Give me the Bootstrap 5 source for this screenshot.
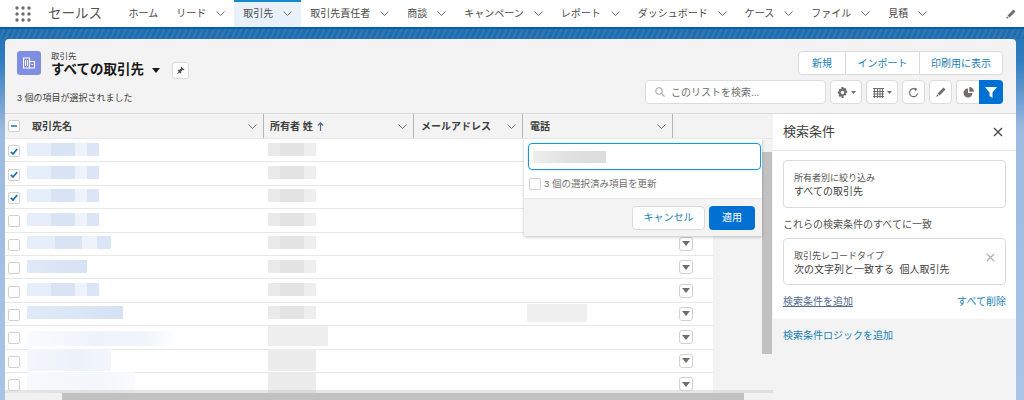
<!DOCTYPE html>
<html lang="ja">
<head>
<meta charset="utf-8">
<title>取引先</title>
<link href="https://cdn.jsdelivr.net/npm/bootstrap@5.3.0/dist/css/bootstrap.min.css" rel="stylesheet">
<style>
html,body{height:400px;overflow:hidden}
body{font-family:"Liberation Sans","Noto Sans CJK JP",sans-serif;font-size:10px;color:#3e3e3c;background:linear-gradient(180deg,#1a6cb0 0,#2f7cc0 60px,#9dbbe0 130px,#a9c4e6 400px);letter-spacing:0}
.flex-none{flex:none}
.sf-top{height:27px;background:#fff;padding-left:15px}
.sf-band{height:12px;background:repeating-linear-gradient(115deg,#1f6dae 0 3px,#2f78b6 3px 5px);border-top:2px solid #0b5fa5}
.sf-app{font-size:13.5px;color:#55534f;margin:0 17.5px 0 17px;line-height:27px;width:54px;white-space:nowrap}
.sf-tab{padding:0 9px;height:27px;white-space:nowrap;color:#4a4a48;display:flex;align-items:center;gap:10px}
.sf-on{background:#e8f1fa;border-top:2px solid #1589d0;padding-bottom:2px}
.sf-wrap{margin:0 8px 0 5px;height:361px;border-radius:4px 4px 0 0;background:#f3f3f3;overflow:hidden;display:flex;flex-direction:column}
.sf-head{height:75px;padding:12px 12px 0 12px;flex:none;border-bottom:1px solid #dddbda}
.sf-ico{width:24px;height:24px;background:#7f8ee0;border-radius:3px}
.sf-lbl{font-size:8.5px;line-height:11px;color:#3e3e3c}
.sf-ttl{font-size:13.5px;line-height:16px;font-weight:700;color:#181818;white-space:nowrap}
.sf-tblock{margin-left:10px}
.sf-pin{width:17px;height:17px;background:#fff;border:1px solid #dddbda;border-radius:3px;margin:11px 0 0 12px}
.sf-sel{font-size:9px;color:#3e3e3c;line-height:12px;margin-top:13px}
.sf-grp{width:205px;height:24px;background:#fff;border:1px solid #dddbda;border-radius:4px;color:#1a7fb5;margin-right:1px}
.sf-grp>div{height:100%;border-left:1px solid #dddbda}
.sf-grp>div:first-child{border-left:0}
.sf-g1{width:46px}.sf-g2{width:74px}
.sf-bar{margin-top:auto;margin-bottom:9px}
.sf-sr{width:181px;height:24px;background:#fff;border:1px solid #dddbda;border-radius:4px;padding-left:9px;color:#706e6b;gap:6px;margin-right:4px}
.sf-tb{height:24px;background:#fff;border:1px solid #dddbda;border-radius:4px;margin-right:4px;gap:3px}
.sf-w32{width:32px}.sf-w23{width:23px}
.sf-tbl{border-radius:4px 0 0 4px;margin-right:0;border-right:0}
.sf-blue{width:24px;height:24px;background:#0070d2;border-radius:0 4px 4px 0;margin-right:1px}
.sf-mainrow{min-height:0}
.sf-gridcol{width:768px}
.sf-cols{height:25px;flex:none;background:#f3f3f3;border-bottom:1px solid #e8e8e8;width:768px;font-size:10px;font-weight:700;color:#3e3e3c}
.sf-cols>div{height:100%;display:flex;align-items:center;justify-content:space-between;padding:0 6px 0 7px;border-right:1px solid #b5b5b5}
.sf-c0{width:19px;flex:none;padding:0 0 0 3px}
.sf-c1{width:240px;flex:none}.sf-c2{width:150px;flex:none}.sf-c3{width:109px;flex:none}.sf-c4{width:150px;flex:none}.sf-c5{width:40px;flex:none}
.sf-cols>.sf-c0{padding:0 0 0 3px;border-right:0;justify-content:flex-start}
.sf-cols>.sf-c1{padding-left:8px}
.sf-cols>.sf-c2{padding-left:6px;justify-content:flex-start}
.sf-body{flex:1 1 auto;min-height:0;width:768px;position:relative;overflow:hidden}
.sf-rows{width:708px;background:#fff;flex:none;overflow:hidden}
.sf-rw{height:23.4px;border-bottom:1px solid #e8e8e8;display:flex;align-items:center}
.sf-rw>.sf-c0{padding-left:3px}
.sf-rw .sf-cb{margin-top:2px}
.sf-cb{width:12px;height:12px;background:#fff;border:1px solid #d2d0ce;border-radius:2px;flex:none;display:flex;align-items:center;justify-content:center}
.sf-blb{height:13px;margin-left:3px;margin-bottom:2px;filter:blur(.7px)}
.sf-bn{background:linear-gradient(90deg,#e6eefa 0 33%,#d8e4f4 33% 66%,#eef3fb 66% 83%,#dbe5f5 83%)}
.sf-bo{margin-left:4px;width:48px;background:linear-gradient(90deg,#eaeaea 0 25%,#e3e3e3 25% 75%,#eeeeee 75%)}
.sf-w72{width:72px}.sf-w84{width:84px}.sf-w60{width:60px}.sf-w96{width:96px}
.sf-dk{background:linear-gradient(90deg,#e0e9f7,#d5e2f4)}
.sf-ft1{width:150px;height:15px;background:linear-gradient(90deg,#fafbfe,#eef3fb 45%,#f0f5fc 80%,#fff);margin-top:4px}
.sf-ft2{width:84px;height:22px;background:linear-gradient(90deg,#f3f6fc,#edf2fa 60%,#f3f6fc)}
.sf-ft3{width:108px;height:22px;background:linear-gradient(90deg,#f8f9fd,#f3f6fb 70%,#fbfbfd)}
.sf-go{margin-left:4px;width:60px;height:20px;background:#eeeeee}
.sf-go2{margin-left:4px;width:48px;height:22px;background:#ececec}
.sf-ph{margin-left:4px;width:60px;height:18px;background:#efefef}
.sf-act{width:14px;height:14px;border:1px solid #d2d0ce;border-radius:3px;background:#fff;margin-left:6px;display:flex;align-items:center;justify-content:center}
.sf-tri{width:0;height:0;border-left:4px solid transparent;border-right:4px solid transparent;border-top:5px solid #706e6b}
.sf-gap{width:49px;flex:none;background:#f3f3f3}
.sf-vs{width:11px;flex:none;background:#f3f3f3;padding-top:13px}
.sf-vth{width:10px;height:202px;background:#c1c1c1}
.sf-fade{position:absolute;left:0;right:0;bottom:0;height:3px;background:rgba(200,200,200,.45)}
.sf-hs{height:7px;flex:none;width:768px;background:#f1f1f1;padding-left:57px}
.sf-hth{width:682px;height:7px;background:#c1c1c1}
.sf-pop{position:absolute;left:519px;top:0;width:238px;height:97px;background:#fff;box-shadow:0 1px 3px rgba(0,0,0,.25);z-index:3;display:flex;flex-direction:column}
.sf-inp{margin:4px 1px 0 4px;height:27px;border:1px solid #1b96d0;border-radius:4px;box-shadow:0 0 3px #bfe3f5;padding-left:4px;display:flex;align-items:center}
.sf-inb{width:73px;height:12px;background:linear-gradient(90deg,#eeeeee,#e0e0e0 50%,#dcdcdc);filter:blur(.6px)}
.sf-chk{height:28px;padding-left:5px;gap:3px;font-size:9.5px;color:#706e6b;display:flex;align-items:center}
.sf-ft{flex:1 1 auto;background:#f3f3f3;border-top:1px solid #e8e8e8;display:flex;justify-content:flex-end;align-items:center;padding-right:7px;gap:4px}
.sf-cn{width:73px;height:24px;background:#fff;border:1px solid #dddbda;border-radius:4px;color:#1a7fb5;font-size:10px;padding:0}
.sf-ap{width:46px;height:24px;background:#0070d2;border:0;border-radius:4px;color:#fff;font-size:10px;padding:0}
.sf-panel{width:243px;flex:none;background:#fff;display:flex;flex-direction:column}
.sf-phd{height:37px;border-bottom:1px solid #e8e8e8;padding:0 13px 0 10px;font-size:13px;color:#3e3e3c;flex:none}
.sf-box{border:1px solid #dddbda;border-radius:4px;margin:0 10px;padding:0 10px}
.sf-b1{height:48px;margin-top:9px;padding-top:10px;flex:none}
.sf-b2{height:47px;padding-top:10px;flex:none}
.sf-mut{font-size:9px;line-height:14px;color:#54524f}
.sf-val{font-size:10px;line-height:14px;color:#3e3e3c}
.sf-mt{margin:10px 10px 6px;line-height:14px;color:#54524f;font-size:10px}
.sf-lnk{margin:10px 10px 0;height:24px;flex:none;line-height:14px}
.sf-ul{color:#54698d;text-decoration:underline}
.sf-a{color:#1a7fb5}
.sf-pft{flex:1 1 auto;background:#f3f3f3;padding:10px;line-height:14px;color:#1a7fb5}
</style>
</head>
<body>
<nav class="sf-top d-flex align-items-center">
  <svg width="16" height="16" viewBox="0 0 16 16" class="flex-none" fill="#6b6b6b"><circle cx="2" cy="2" r="1.7"/><circle cx="8" cy="2" r="1.7"/><circle cx="14" cy="2" r="1.7"/><circle cx="2" cy="8" r="1.7"/><circle cx="8" cy="8" r="1.7"/><circle cx="14" cy="8" r="1.7"/><circle cx="2" cy="14" r="1.7"/><circle cx="8" cy="14" r="1.7"/><circle cx="14" cy="14" r="1.7"/></svg>
  <div class="sf-app" >セールス</div>
  <div class="sf-tab">ホーム</div>
  <div class="sf-tab">リード<svg width="9" height="5" viewBox="0 0 9 5"><path d="M.5.5 4.5 4.5 8.5.5" fill="none" stroke="#706e6b"/></svg></div>
  <div class="sf-tab sf-on">取引先<svg width="9" height="5" viewBox="0 0 9 5"><path d="M.5.5 4.5 4.5 8.5.5" fill="none" stroke="#706e6b"/></svg></div>
  <div class="sf-tab">取引先責任者<svg width="9" height="5" viewBox="0 0 9 5"><path d="M.5.5 4.5 4.5 8.5.5" fill="none" stroke="#706e6b"/></svg></div>
  <div class="sf-tab">商談<svg width="9" height="5" viewBox="0 0 9 5"><path d="M.5.5 4.5 4.5 8.5.5" fill="none" stroke="#706e6b"/></svg></div>
  <div class="sf-tab">キャンペーン<svg width="9" height="5" viewBox="0 0 9 5"><path d="M.5.5 4.5 4.5 8.5.5" fill="none" stroke="#706e6b"/></svg></div>
  <div class="sf-tab">レポート<svg width="9" height="5" viewBox="0 0 9 5"><path d="M.5.5 4.5 4.5 8.5.5" fill="none" stroke="#706e6b"/></svg></div>
  <div class="sf-tab">ダッシュボード<svg width="9" height="5" viewBox="0 0 9 5"><path d="M.5.5 4.5 4.5 8.5.5" fill="none" stroke="#706e6b"/></svg></div>
  <div class="sf-tab">ケース<svg width="9" height="5" viewBox="0 0 9 5"><path d="M.5.5 4.5 4.5 8.5.5" fill="none" stroke="#706e6b"/></svg></div>
  <div class="sf-tab">ファイル<svg width="9" height="5" viewBox="0 0 9 5"><path d="M.5.5 4.5 4.5 8.5.5" fill="none" stroke="#706e6b"/></svg></div>
  <div class="sf-tab">見積<svg width="9" height="5" viewBox="0 0 9 5"><path d="M.5.5 4.5 4.5 8.5.5" fill="none" stroke="#706e6b"/></svg></div>
  <svg class="ms-auto me-2" width="10" height="10" viewBox="0 0 10 10" fill="#706e6b"><path d="M7.5.5 9.5 2.5 3.5 8.5 1.5 6.5ZM1 7.2 2.8 9 .3 9.7Z"/></svg>
</nav>
<div class="sf-band"></div>
<main class="sf-wrap">
  <header class="sf-head d-flex justify-content-between">
    <div>
      <div class="d-flex">
        <div class="sf-ico d-flex align-items-center justify-content-center">
          <svg width="14" height="12" viewBox="0 0 14 12" fill="none" stroke="#fff"><rect x="1.5" y="1" width="6" height="10"/><rect x="7.5" y="4.5" width="5" height="6.5"/><path d="M3.5 3v6M5.5 3v6M9.5 7.5h1.5"/></svg>
        </div>
        <div class="sf-tblock">
          <div class="sf-lbl">取引先</div>
          <div class="sf-ttl d-flex align-items-center">すべての取引先<svg class="ms-2" width="8" height="5" viewBox="0 0 8 5"><path d="M0 0h8L4 5Z" fill="#181818"/></svg></div>
        </div>
        <div class="sf-pin d-flex align-items-center justify-content-center">
          <svg width="9" height="9" viewBox="0 0 9 9" fill="#54524f"><path d="M5.3.5 8.5 3.7 7.6 4.2 6.7 3.8 5.2 5.4 5.2 7 4.6 7.4 1.6 4.4 2 3.8 3.6 3.8 5.2 2.3 4.8 1.4ZM2.6 5.4 3.6 6.4.6 8.4Z"/></svg>
        </div>
      </div>
      <div class="sf-sel">3 個の項目が選択されました</div>
    </div>
    <div class="d-flex flex-column align-items-end">
      <div class="sf-grp d-flex text-center">
        <div class="d-flex align-items-center justify-content-center flex-none sf-g1">新規</div>
        <div class="d-flex align-items-center justify-content-center flex-none sf-g2">インポート</div>
        <div class="d-flex align-items-center justify-content-center flex-grow-1">印刷用に表示</div>
      </div>
      <div class="d-flex sf-bar">
        <div class="sf-sr d-flex align-items-center">
          <svg width="10" height="10" viewBox="0 0 10 10" fill="none" stroke="#a8a6a3" stroke-width="1.1"><circle cx="4" cy="4" r="3.2"/><path d="M6.4 6.4 9.5 9.5"/></svg>このリストを検索...
        </div>
        <div class="sf-tb sf-w32 d-flex align-items-center justify-content-center">
          <svg width="11" height="11" viewBox="0 0 11 11" fill="#706e6b"><path d="M4.5 0h2l.3 1.5 1.3-.8 1.4 1.4-.8 1.3 1.5.3v2l-1.5.3.8 1.3-1.4 1.4-1.3-.8L6.5 11h-2l-.3-1.9-1.3.8-1.4-1.4.8-1.3L.8 6.5v-2l1.5-.3-.8-1.3 1.4-1.4 1.3.8Z"/><circle cx="5.5" cy="5.5" r="1.7" fill="#fff"/></svg>
          <svg width="5" height="3" viewBox="0 0 5 3"><path d="M0 0h5L2.500 3Z" fill="#706e6b"/></svg>
        </div>
        <div class="sf-tb sf-w32 d-flex align-items-center justify-content-center">
          <svg width="11" height="11" viewBox="0 0 11 11" fill="none" stroke="#706e6b"><path d="M0 1.500h11M0 4.500h11M0 7h11M0 9.500h11M1.500 1v10M4.500 1v10M7 1v10M9.500 1v10"/></svg>
          <svg width="5" height="3" viewBox="0 0 5 3"><path d="M0 0h5L2.500 3Z" fill="#706e6b"/></svg>
        </div>
        <div class="sf-tb sf-w23 d-flex align-items-center justify-content-center">
          <svg width="11" height="11" viewBox="0 0 11 11" fill="none" stroke="#706e6b" stroke-width="1.200"><path d="M9.500 6.500A4 4 0 1 1 7.500 2.200"/><path d="M6.500 .5 9.500 2 7 4.200Z" fill="#706e6b" stroke="none"/></svg>
        </div>
        <div class="sf-tb sf-w23 d-flex align-items-center justify-content-center">
          <svg width="10" height="10" viewBox="0 0 10 10" fill="#706e6b"><path d="M7.500.5 9.500 2.500 3.500 8.500 1.500 6.500ZM1 7.200 2.800 9 .3 9.700Z"/></svg>
        </div>
        <div class="sf-tb sf-w23 sf-tbl d-flex align-items-center justify-content-center">
          <svg width="11" height="11" viewBox="0 0 11 11" fill="#706e6b"><path d="M5 1.500A4.500 4.500 0 1 0 9.500 6H5Z"/><path d="M6.300 0A4.700 4.700 0 0 1 11 4.700H6.300Z"/></svg>
        </div>
        <div class="sf-blue d-flex align-items-center justify-content-center">
          <svg width="12" height="11" viewBox="0 0 12 11"><path d="M0 0h12L7.500 5.500V11L4.500 9V5.500Z" fill="#fff"/></svg>
        </div>
      </div>
    </div>
  </header>
  <div class="d-flex flex-grow-1 sf-mainrow">
    <div class="d-flex flex-column flex-none sf-gridcol">
      <div class="sf-cols d-flex">
        <div class="sf-c0"><span class="sf-cb"><svg width="8" height="8" viewBox="0 0 8 8"><path d="M1 4h6" stroke="#1a6fb5" stroke-width="1.600"/></svg></span></div>
        <div class="sf-c1"><span>取引先名</span><svg width="9" height="5" viewBox="0 0 9 5"><path d="M.5.5 4.500 4.500 8.500.5" fill="none" stroke="#706e6b"/></svg></div>
        <div class="sf-c2"><span>所有者 姓</span><svg class="ms-1" width="7" height="9" viewBox="0 0 7 9" fill="none" stroke="#54698d" stroke-width="1.200"><path d="M3.500 9V1M.8 3.500 3.500.8 6.200 3.500"/></svg><svg class="ms-auto" width="9" height="5" viewBox="0 0 9 5"><path d="M.5.5 4.500 4.500 8.500.5" fill="none" stroke="#706e6b"/></svg></div>
        <div class="sf-c3"><span>メールアドレス</span><svg width="9" height="5" viewBox="0 0 9 5"><path d="M.5.5 4.500 4.500 8.500.5" fill="none" stroke="#706e6b"/></svg></div>
        <div class="sf-c4"><span>電話</span><svg width="9" height="5" viewBox="0 0 9 5"><path d="M.5.5 4.500 4.500 8.500.5" fill="none" stroke="#706e6b"/></svg></div>
      </div>
      <div class="sf-body d-flex flex-grow-1">
        <div class="sf-pop">
          <div class="sf-inp"><div class="sf-inb"></div></div>
          <div class="sf-chk"><span class="sf-cb"></span>3 個の選択済み項目を更新</div>
          <div class="sf-ft"><button class="sf-cn" type="button">キャンセル</button><button class="sf-ap" type="button">適用</button></div>
        </div>
        <div class="sf-rows">
          <div class="sf-rw"><div class="sf-c0"><span class="sf-cb"><svg width="8" height="7" viewBox="0 0 8 7"><path d="M.8 3.800 3 6 7.200 1" fill="none" stroke="#1a6fb5" stroke-width="1.700"/></svg></span></div><div class="sf-c1"><div class="sf-blb sf-bn sf-w72"></div></div><div class="sf-c2"><div class="sf-blb sf-bo"></div></div><div class="sf-c3"></div><div class="sf-c4"></div><div class="sf-c5"></div></div>
          <div class="sf-rw"><div class="sf-c0"><span class="sf-cb"><svg width="8" height="7" viewBox="0 0 8 7"><path d="M.8 3.800 3 6 7.200 1" fill="none" stroke="#1a6fb5" stroke-width="1.700"/></svg></span></div><div class="sf-c1"><div class="sf-blb sf-bn sf-w72"></div></div><div class="sf-c2"><div class="sf-blb sf-bo"></div></div><div class="sf-c3"></div><div class="sf-c4"></div><div class="sf-c5"></div></div>
          <div class="sf-rw"><div class="sf-c0"><span class="sf-cb"><svg width="8" height="7" viewBox="0 0 8 7"><path d="M.8 3.800 3 6 7.200 1" fill="none" stroke="#1a6fb5" stroke-width="1.700"/></svg></span></div><div class="sf-c1"><div class="sf-blb sf-bn sf-w72"></div></div><div class="sf-c2"><div class="sf-blb sf-bo"></div></div><div class="sf-c3"></div><div class="sf-c4"></div><div class="sf-c5"></div></div>
          <div class="sf-rw"><div class="sf-c0"><span class="sf-cb"></span></div><div class="sf-c1"><div class="sf-blb sf-bn sf-w72"></div></div><div class="sf-c2"><div class="sf-blb sf-bo"></div></div><div class="sf-c3"></div><div class="sf-c4"></div><div class="sf-c5"></div></div>
          <div class="sf-rw"><div class="sf-c0"><span class="sf-cb"></span></div><div class="sf-c1"><div class="sf-blb sf-bn sf-w84"></div></div><div class="sf-c2"><div class="sf-blb sf-bo"></div></div><div class="sf-c3"></div><div class="sf-c4"></div><div class="sf-c5"><div class="sf-act"><div class="sf-tri"></div></div></div></div>
          <div class="sf-rw"><div class="sf-c0"><span class="sf-cb"></span></div><div class="sf-c1"><div class="sf-blb sf-dk sf-w60"></div></div><div class="sf-c2"><div class="sf-blb sf-bo"></div></div><div class="sf-c3"></div><div class="sf-c4"></div><div class="sf-c5"><div class="sf-act"><div class="sf-tri"></div></div></div></div>
          <div class="sf-rw"><div class="sf-c0"><span class="sf-cb"></span></div><div class="sf-c1"><div class="sf-blb sf-bn sf-w72"></div></div><div class="sf-c2"><div class="sf-blb sf-bo"></div></div><div class="sf-c3"></div><div class="sf-c4"></div><div class="sf-c5"><div class="sf-act"><div class="sf-tri"></div></div></div></div>
          <div class="sf-rw"><div class="sf-c0"><span class="sf-cb"></span></div><div class="sf-c1"><div class="sf-blb sf-dk sf-w96"></div></div><div class="sf-c2"><div class="sf-blb sf-bo"></div></div><div class="sf-c3"></div><div class="sf-c4"><div class="sf-blb sf-ph"></div></div><div class="sf-c5"><div class="sf-act"><div class="sf-tri"></div></div></div></div>
          <div class="sf-rw"><div class="sf-c0"><span class="sf-cb"></span></div><div class="sf-c1"><div class="sf-blb sf-ft1"></div></div><div class="sf-c2"><div class="sf-blb sf-go"></div></div><div class="sf-c3"></div><div class="sf-c4"></div><div class="sf-c5"><div class="sf-act"><div class="sf-tri"></div></div></div></div>
          <div class="sf-rw"><div class="sf-c0"><span class="sf-cb"></span></div><div class="sf-c1"><div class="sf-blb sf-ft2"></div></div><div class="sf-c2"><div class="sf-blb sf-go2"></div></div><div class="sf-c3"></div><div class="sf-c4"></div><div class="sf-c5"><div class="sf-act"><div class="sf-tri"></div></div></div></div>
          <div class="sf-rw"><div class="sf-c0"><span class="sf-cb"></span></div><div class="sf-c1"><div class="sf-blb sf-ft3"></div></div><div class="sf-c2"><div class="sf-blb sf-go2"></div></div><div class="sf-c3"></div><div class="sf-c4"></div><div class="sf-c5"><div class="sf-act"><div class="sf-tri"></div></div></div></div>
        </div>
        <div class="sf-gap"></div>
        <div class="sf-vs"><div class="sf-vth"></div></div>
        <div class="sf-fade"></div>
      </div>
      <div class="sf-hs"><div class="sf-hth"></div></div>
    </div>
    <aside class="sf-panel">
      <div class="sf-phd d-flex align-items-center justify-content-between">検索条件<svg width="10" height="10" viewBox="0 0 10 10"><path d="M1 1 9 9M9 1 1 9" stroke="#54524f" stroke-width="1.500"/></svg></div>
      <div class="sf-box sf-b1"><div class="sf-mut">所有者別に絞り込み</div><div class="sf-val">すべての取引先</div></div>
      <div class="sf-mt">これらの検索条件のすべてに一致</div>
      <div class="sf-box sf-b2 d-flex justify-content-between"><div><div class="sf-mut">取引先レコードタイプ</div><div class="sf-val">次の文字列と一致する&nbsp;&nbsp;個人取引先</div></div><svg class="mt-1" width="9" height="9" viewBox="0 0 9 9"><path d="M1 1 8 8M8 1 1 8" stroke="#b0adab" stroke-width="1.200"/></svg></div>
      <div class="sf-lnk d-flex justify-content-between"><span class="sf-ul">検索条件を追加</span><span class="sf-a">すべて削除</span></div>
      <div class="sf-pft">検索条件ロジックを追加</div>
    </aside>
  </div>
</main>
<script src="https://cdn.jsdelivr.net/npm/bootstrap@5.3.0/dist/js/bootstrap.bundle.min.js"></script>
</body>
</html>
